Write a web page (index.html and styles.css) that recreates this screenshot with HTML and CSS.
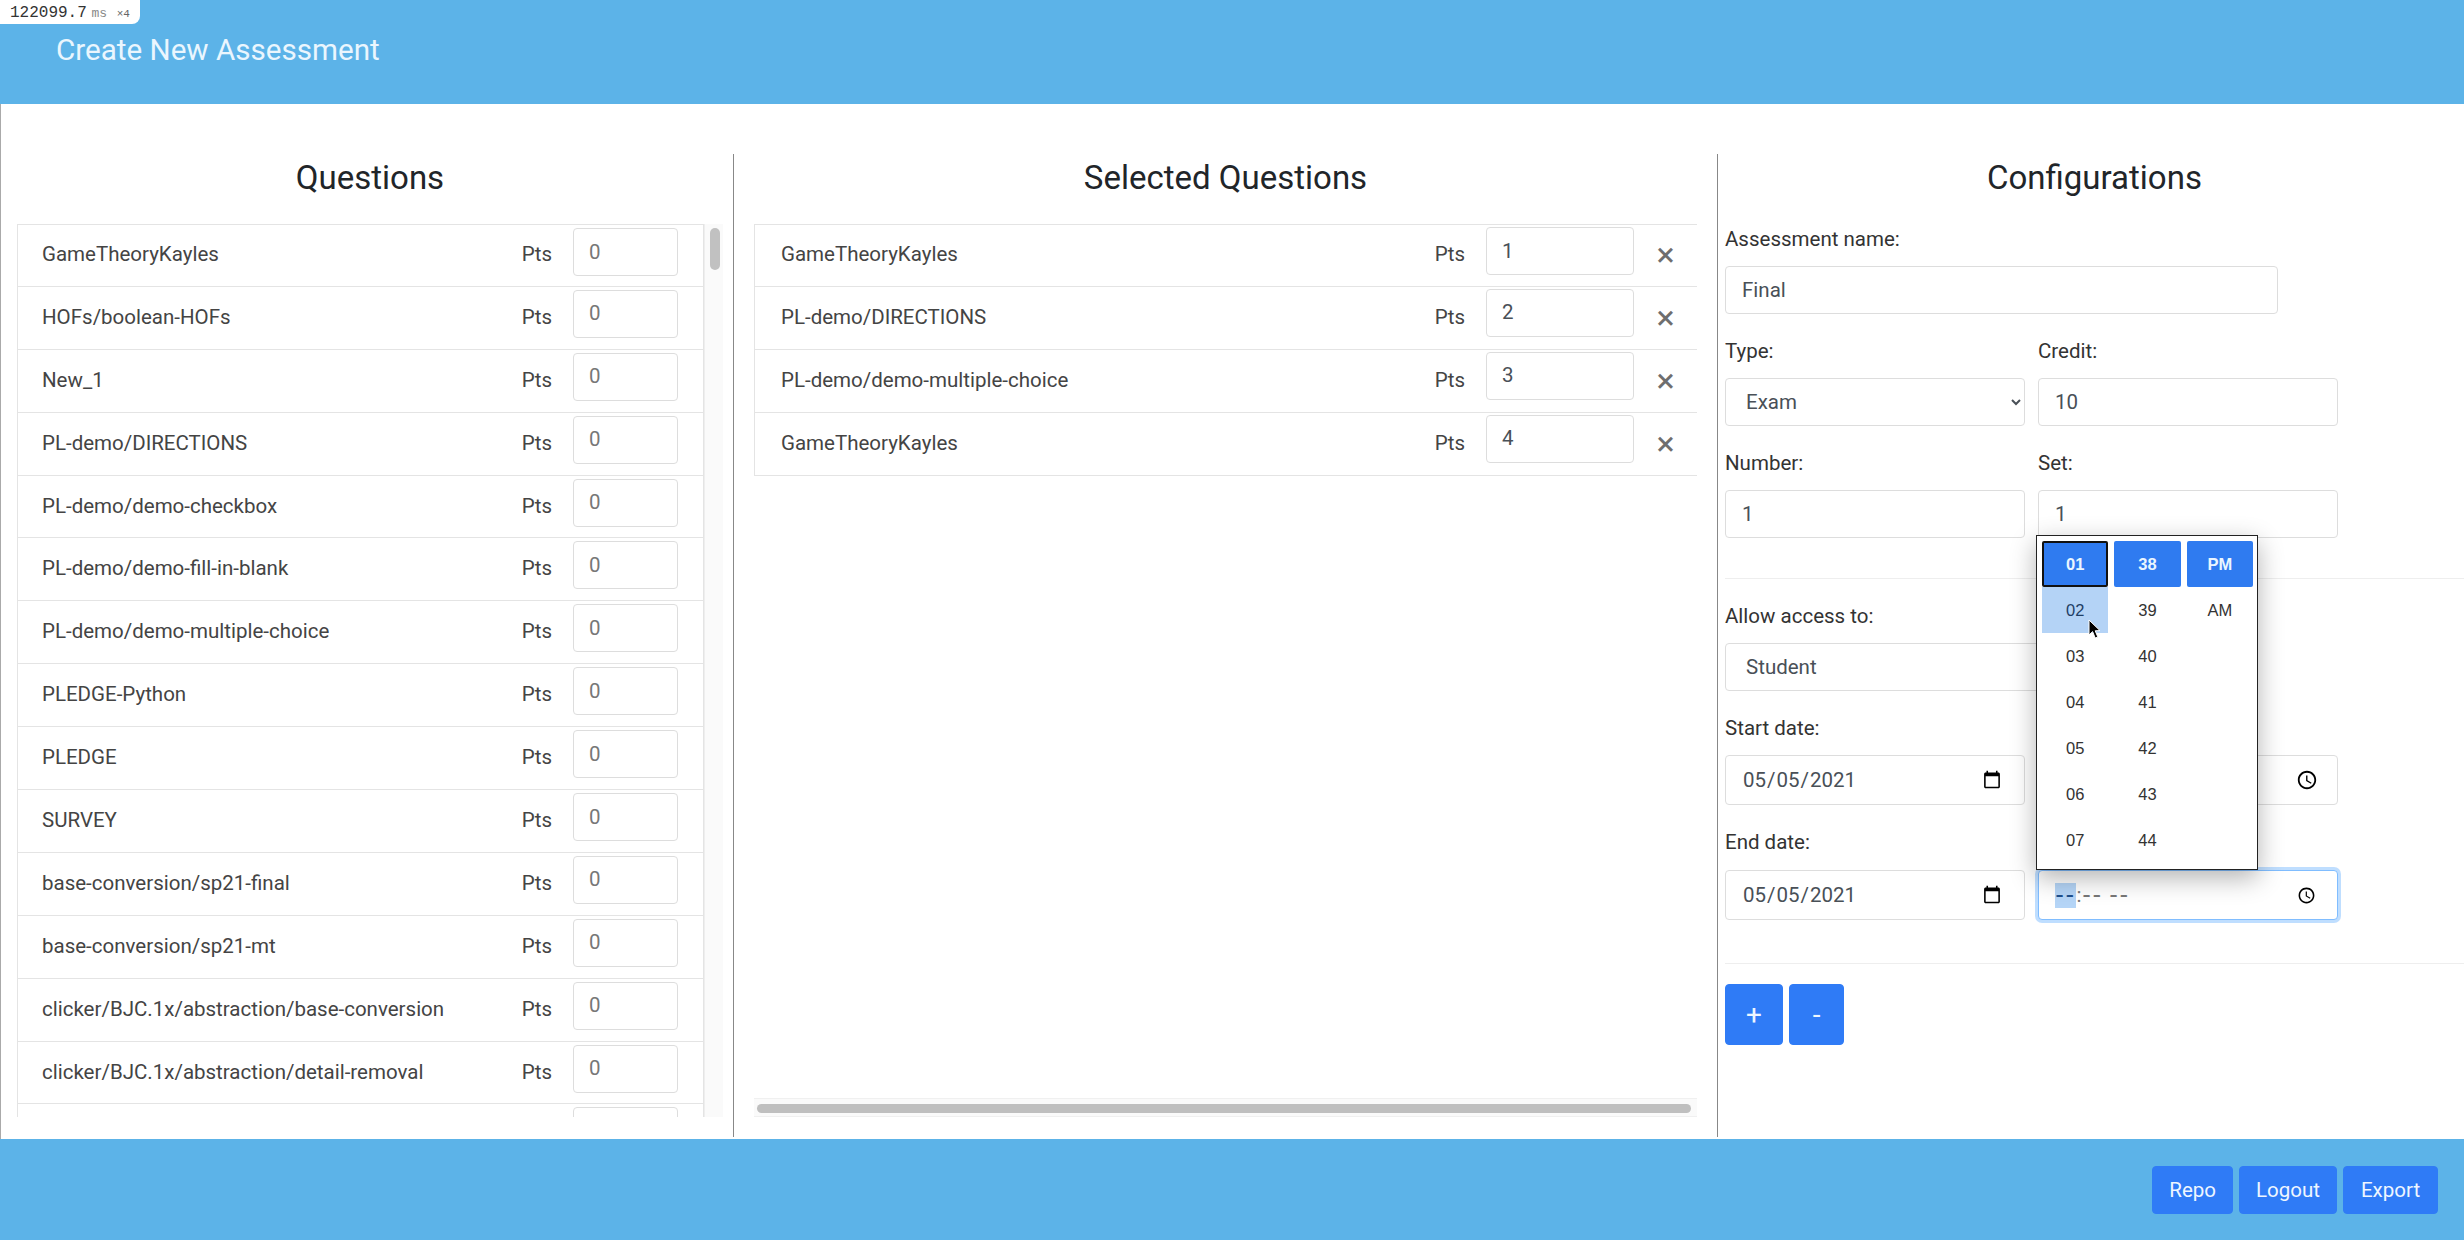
FILE: index.html
```html
<!DOCTYPE html>
<html lang="en">
<head>
  <meta charset="UTF-8" />
  <meta name="viewport" content="width=device-width, initial-scale=1.0" />
  <title>Create New Assessment</title>
  <link rel="stylesheet" href="styles.css">
</head>
<body>

<div class="timing"><span>122099.7</span> <span class="timing-unit">ms</span> <span class="timing-count">×4</span></div>

<header class="topbar">
  <h1>Create New Assessment</h1>
</header>

<main class="workspace">
  <section class="col col-questions">
    <h2>Questions</h2>
    <div class="scroll-row">
      <ul class="list">
        <li class="item"><span class="name">GameTheoryKayles</span><span class="pts">Pts</span><input class="pts-input" placeholder="0"></li>
        <li class="item"><span class="name">HOFs/boolean-HOFs</span><span class="pts">Pts</span><input class="pts-input" placeholder="0"></li>
        <li class="item"><span class="name">New_1</span><span class="pts">Pts</span><input class="pts-input" placeholder="0"></li>
        <li class="item"><span class="name">PL-demo/DIRECTIONS</span><span class="pts">Pts</span><input class="pts-input" placeholder="0"></li>
        <li class="item"><span class="name">PL-demo/demo-checkbox</span><span class="pts">Pts</span><input class="pts-input" placeholder="0"></li>
        <li class="item"><span class="name">PL-demo/demo-fill-in-blank</span><span class="pts">Pts</span><input class="pts-input" placeholder="0"></li>
        <li class="item"><span class="name">PL-demo/demo-multiple-choice</span><span class="pts">Pts</span><input class="pts-input" placeholder="0"></li>
        <li class="item"><span class="name">PLEDGE-Python</span><span class="pts">Pts</span><input class="pts-input" placeholder="0"></li>
        <li class="item"><span class="name">PLEDGE</span><span class="pts">Pts</span><input class="pts-input" placeholder="0"></li>
        <li class="item"><span class="name">SURVEY</span><span class="pts">Pts</span><input class="pts-input" placeholder="0"></li>
        <li class="item"><span class="name">base-conversion/sp21-final</span><span class="pts">Pts</span><input class="pts-input" placeholder="0"></li>
        <li class="item"><span class="name">base-conversion/sp21-mt</span><span class="pts">Pts</span><input class="pts-input" placeholder="0"></li>
        <li class="item"><span class="name">clicker/BJC.1x/abstraction/base-conversion</span><span class="pts">Pts</span><input class="pts-input" placeholder="0"></li>
        <li class="item"><span class="name">clicker/BJC.1x/abstraction/detail-removal</span><span class="pts">Pts</span><input class="pts-input" placeholder="0"></li>
        <li class="item"><span class="name"></span><span class="pts"></span><input class="pts-input" placeholder="0"></li>
      </ul>
      <div class="vbar"><div class="vbar-thumb"></div></div>
    </div>
  </section>

  <section class="col col-selected">
    <h2>Selected Questions</h2>
    <div class="selected-box">
      <ul class="list">
        <li class="item"><span class="name">GameTheoryKayles</span><span class="pts">Pts</span><input class="pts-input" value="1"><button class="remove">×</button></li>
        <li class="item"><span class="name">PL-demo/DIRECTIONS</span><span class="pts">Pts</span><input class="pts-input" value="2"><button class="remove">×</button></li>
        <li class="item"><span class="name">PL-demo/demo-multiple-choice</span><span class="pts">Pts</span><input class="pts-input" value="3"><button class="remove">×</button></li>
        <li class="item"><span class="name">GameTheoryKayles</span><span class="pts">Pts</span><input class="pts-input" value="4"><button class="remove">×</button></li>
      </ul>
      <div class="hbar"><div class="hbar-thumb"></div></div>
    </div>
  </section>

  <section class="col col-config">
    <h2>Configurations</h2>

    <label for="name">Assessment name:</label>
    <input class="control control-wide" id="name" value="Final">

    <div class="pair">
      <div>
        <label for="type">Type:</label>
        <select class="control" id="type"><option>Exam</option></select>
      </div>
      <div>
        <label for="credit">Credit:</label>
        <input class="control" id="credit" value="10">
      </div>
    </div>

    <div class="pair">
      <div>
        <label for="number">Number:</label>
        <input class="control" id="number" value="1">
      </div>
      <div>
        <label for="set">Set:</label>
        <input class="control" id="set" value="1">
      </div>
    </div>

    <hr class="rule rule-access">

    <label for="access">Allow access to:</label>
    <select class="control control-access" id="access"><option>Student</option></select>

    <label for="startDate">Start date:</label>
    <div class="pair">
      <input class="control control-date" type="date" id="startDate" value="2021-05-05">
      <input class="control control-date" type="time" id="startTime" value="13:38">
    </div>

    <label class="end-label" for="endDate">End date:</label>
    <div class="pair">
      <input class="control control-date" type="date" id="endDate" value="2021-05-05">
      <div class="time-wrap">
        <div class="control control-date time-field is-focus">
          <span class="seg seg-on">--</span><span class="seg-colon">:</span><span class="seg">--</span><span class="seg seg-ampm">--</span>
          <svg class="clock" width="19" height="19" viewBox="0 0 24 24">
            <path d="M11.99 2C6.47 2 2 6.48 2 12s4.47 10 9.99 10C17.52 22 22 17.52 22 12S17.52 2 11.99 2zM12 20c-4.42 0-8-3.58-8-8s3.58-8 8-8 8 3.58 8 8-3.58 8-8 8zm.5-13H11v6l5.25 3.15.75-1.23-4.5-2.67z"/>
          </svg>
        </div>

        <div class="picker">
          <div class="picker-col">
            <div class="cell cell-on cell-focus">01</div>
            <div class="cell cell-hover">02</div>
            <div class="cell">03</div>
            <div class="cell">04</div>
            <div class="cell">05</div>
            <div class="cell">06</div>
            <div class="cell">07</div>
          </div>
          <div class="picker-col">
            <div class="cell cell-on">38</div>
            <div class="cell">39</div>
            <div class="cell">40</div>
            <div class="cell">41</div>
            <div class="cell">42</div>
            <div class="cell">43</div>
            <div class="cell">44</div>
          </div>
          <div class="picker-col">
            <div class="cell cell-on">PM</div>
            <div class="cell">AM</div>
          </div>
          <svg class="cursor" width="14" height="21" viewBox="0 0 14 21">
            <path d="M1 1 L1 16 L4.6 12.6 L7.2 19 L9.8 17.9 L7.2 11.8 L12 11.6 Z" fill="#000" stroke="#fff" stroke-width="1"/>
          </svg>
        </div>
      </div>
    </div>

    <hr class="rule rule-actions">

    <div class="steppers">
      <button class="btn btn-plus">+</button>
      <button class="btn btn-minus">-</button>
    </div>
  </section>
</main>

<footer class="bottombar">
  <button class="btn">Repo</button>
  <button class="btn">Logout</button>
  <button class="btn btn-export">Export</button>
</footer>

</body>
</html>
```

FILE: styles.css
```css
* {
  box-sizing: border-box;
}
html, body {
  height: 100%;
}
body {
  margin: 0;
  display: flex;
  flex-direction: column;
  overflow: hidden;
  background: #fff;
  color: #333;
  font-family: Roboto, sans-serif;
  font-size: 20.5px;
}

/* recording overlay in the corner */
.timing {
  position: absolute;
  top: 0;
  left: 0;
  width: 140px;
  height: 24px;
  padding: 4px 0 0 10px;
  background: #fff;
  border-bottom-right-radius: 8px;
  font-family: "Liberation Mono", monospace;
  font-size: 16px;
  line-height: 18px;
  white-space: nowrap;
  color: #333;
}
.timing-unit {
  margin-left: -5px;
  font-size: 13px;
  color: #888;
}
.timing-count {
  font-size: 11px;
  color: #666;
}

.topbar {
  flex: 0 0 104px;
  padding: 30px 56px 0;
  background: #5cb3e8;
}
.topbar h1 {
  margin: 0;
  font-size: 29.6px;
  font-weight: 400;
  line-height: 40px;
  color: #eaf6fe;
}

.workspace {
  flex: 1;
  display: flex;
  min-height: 0;
  padding: 50px 0 2px;
  border-left: 1px solid #aaa;
}
.col {
  display: flex;
  flex-direction: column;
  min-height: 0;
}
.col h2 {
  margin: 0 0 22px;
  font-size: 33px;
  font-weight: 400;
  line-height: 48px;
  text-align: center;
  color: #212529;
}
.col-questions {
  width: 733px;
  padding: 0 10px 20px 16px;
  border-right: 1px solid #888;
}
.col-selected {
  width: 984px;
  padding: 0 20px 20px;
  border-right: 1px solid #888;
}
.col-config {
  flex: 1;
  padding-left: 7px;
}
.col-config h2 {
  margin-bottom: 0;
}

.scroll-row {
  flex: 1;
  display: flex;
  min-height: 0;
}
.list {
  flex: 1;
  margin: 0;
  padding: 0;
  overflow: hidden;
  list-style: none;
}
.item {
  display: flex;
  height: 62.9px;
  padding: 0 0 2px 24px;
  border: 1px solid #e4e4e4;
  border-top: 0;
  color: #444;
}
.item:first-child {
  border-top: 1px solid #e4e4e4;
}
.name {
  flex: 1;
  align-self: center;
  white-space: nowrap;
}
.pts {
  align-self: center;
  margin-right: 21px;
}
.pts-input {
  flex: none;
  width: 105px;
  height: 48px;
  margin: 3px 25px 0 0;
  padding: 0 15px 1px;
  border: 1px solid #ddd;
  border-radius: 4px;
  font-family: Roboto, sans-serif;
  font-size: 20.5px;
  color: #495057;
}
.pts-input::placeholder {
  color: #777;
}

.vbar {
  flex: none;
  width: 19px;
  padding: 4px 3px 0 5px;
  background: #fafafa;
  border-left: 1px solid #eee;
}
.vbar-thumb {
  height: 42px;
  border-radius: 5px;
  background: #c1c1c1;
}

.selected-box {
  flex: 1;
  display: flex;
  flex-direction: column;
  min-height: 0;
}
.col-selected .item {
  padding-left: 26px;
  border-right: 0;
}
.col-selected .pts-input {
  width: 148px;
  margin: 2px 0 0;
}
.remove {
  flex: none;
  width: 63px;
  padding: 0;
  border: 0;
  background: none;
  font-family: Roboto, sans-serif;
  font-size: 34px;
  font-weight: 400;
  line-height: 1;
  color: #6e6e6e;
}
.hbar {
  flex: none;
  height: 19px;
  padding: 5px 6px 3px 3px;
  background: #fafafa;
  border-top: 1px solid #f0f0f0;
  border-bottom: 1px solid #f0f0f0;
}
.hbar-thumb {
  height: 100%;
  border-radius: 5px;
  background: #bfbfbf;
}

label {
  display: block;
  margin: 25px 0 15px;
  line-height: 24px;
  color: #333;
}
.control {
  display: block;
  width: 100%;
  height: 48px;
  padding: 0 16px;
  border: 1px solid #ddd;
  border-radius: 4px;
  background: #fff;
  font-family: Roboto, sans-serif;
  font-size: 20.5px;
  color: #495057;
}
.control-wide {
  width: 553px;
}
/* runs on under the picker, its arrow is covered */
.control-access {
  width: 400px;
}
.control-date {
  height: 50px;
}
input[type="date"].control {
  padding-right: 20px;
}
select.control {
  padding-left: 16px;
}
.is-focus {
  border-color: #80bdff;
  box-shadow: 0 0 0 3px rgba(0, 123, 255, 0.25);
  outline: 0;
}

.time-field {
  display: flex;
  align-items: center;
  padding-right: 21px;
  color: #777;
}
.seg {
  width: 21px;
  padding-left: 1px;
  font-size: 26px;
  line-height: 25px;
  letter-spacing: 3px;
  white-space: nowrap;
}
.seg-on {
  background: #b5d5f7;
  color: #1c4f8c;
}
.seg-colon {
  width: 6px;
  text-align: center;
}
.seg-ampm {
  margin-left: 6px;
}
.clock {
  flex: none;
  margin-left: auto;
  fill: #000;
}

.pair {
  display: grid;
  grid-template-columns: 300px 300px;
  column-gap: 13px;
}
.rule {
  margin: 0;
  border: 0;
  border-top: 1px solid #eee;
}
.rule-access {
  margin-top: 40px;
}
.rule-actions {
  margin-top: 43px;
}
.end-label {
  margin-bottom: 16px;
}

.time-wrap {
  position: relative;
}
.picker {
  position: absolute;
  left: -2px;
  bottom: 100%;
  width: 222px;
  height: 335px;
  display: flex;
  gap: 6px;
  padding: 5px 4px 0 5px;
  overflow: hidden;
  background: #fff;
  border: 1px solid #222;
  box-shadow: 0 8px 24px rgba(0, 0, 0, 0.3);
  font-family: "Liberation Sans", sans-serif;
  font-size: 16.5px;
  color: #333;
}
.picker-col {
  flex: 1;
}
.cell {
  display: flex;
  align-items: center;
  justify-content: center;
  height: 46.1px;
}
.cell-on {
  background: #2f7bf0;
  border-radius: 2px;
  font-weight: 700;
  color: #eaf6ff;
}
.cell-focus {
  border: 2px solid #111;
}
.cell-hover {
  background: #b4d3f6;
  color: #1f3f66;
}
.cursor {
  position: absolute;
  left: 51px;
  top: 83px;
}

.steppers {
  display: flex;
  gap: 6px;
  margin-top: 20px;
}
.btn {
  height: 48px;
  padding: 0 16px;
  border: 1px solid #2f7bf6;
  border-radius: 4px;
  background: #2f7bf6;
  font-family: Roboto, sans-serif;
  font-size: 20.5px;
  color: #eef6ff;
}
.steppers .btn {
  height: 61px;
  padding: 0;
  font-size: 28px;
}
.btn-plus {
  width: 58px;
}
.btn-minus {
  width: 55px;
}
.btn-export {
  min-width: 95px;
}

.bottombar {
  flex: 0 0 101px;
  display: flex;
  align-items: center;
  justify-content: flex-end;
  gap: 6px;
  padding-right: 26px;
  background: #5cb3e8;
}
```
